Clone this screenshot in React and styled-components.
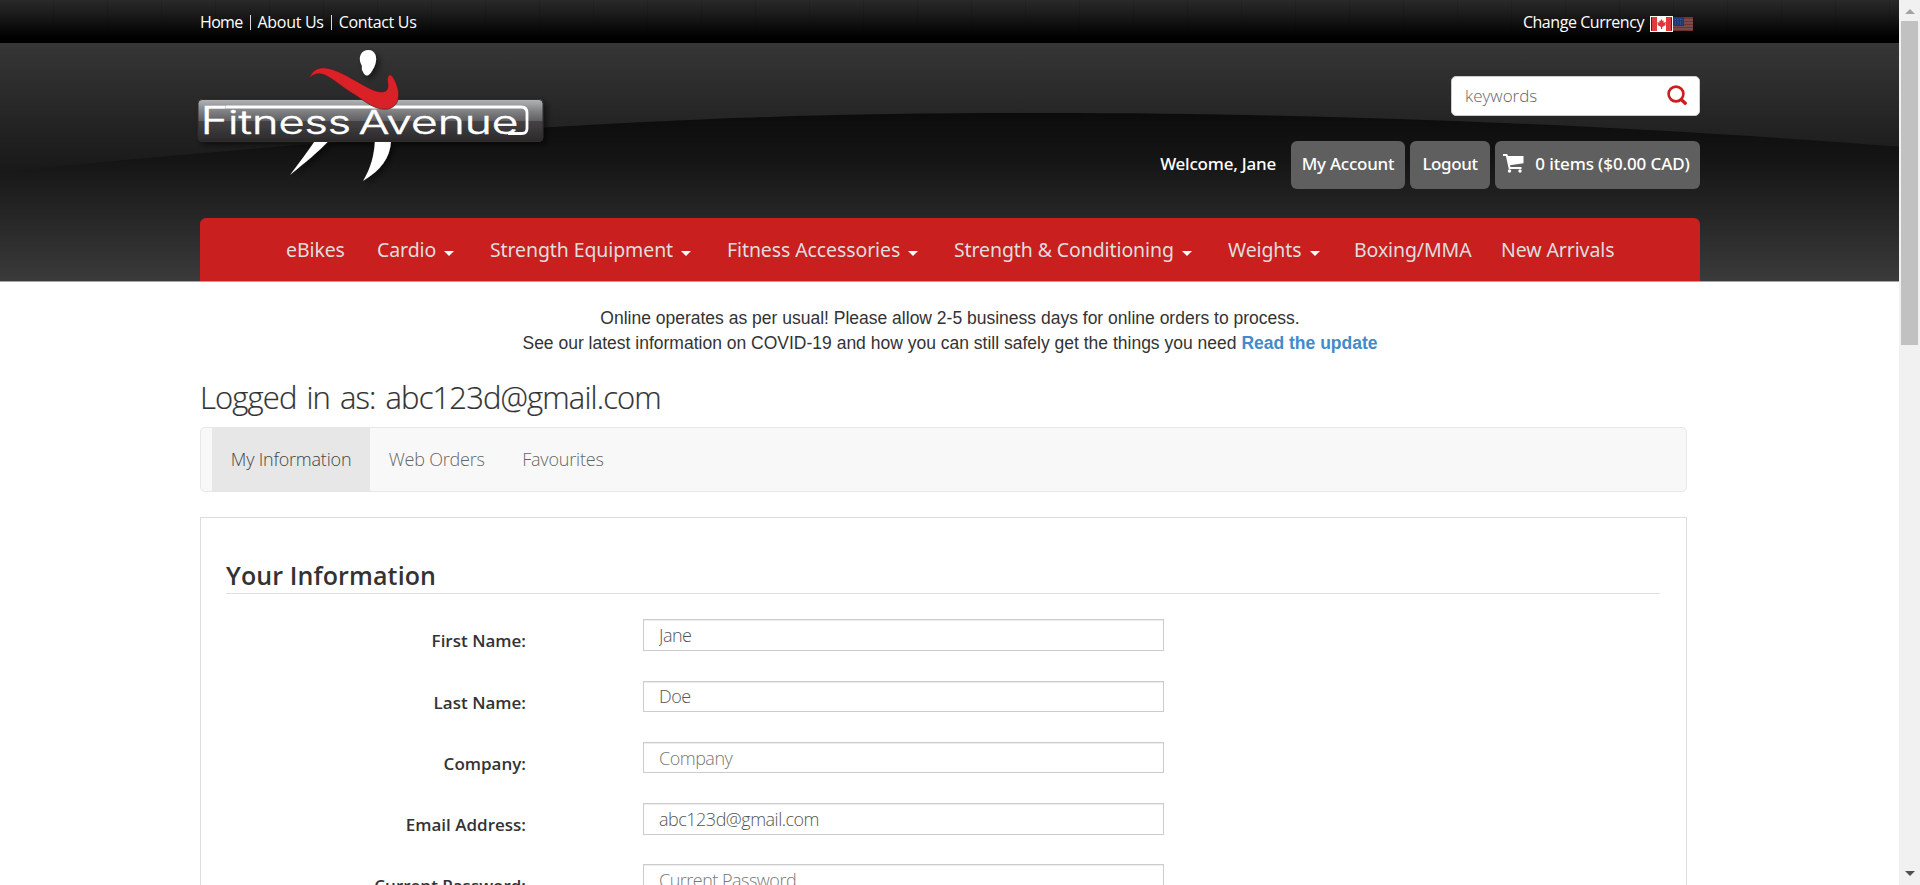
import React from "react";
import styled, { createGlobalStyle } from "styled-components";

const GlobalStyle = createGlobalStyle`
  * { box-sizing: border-box; }
  body { margin: 0; background: #fff; color: #333; overflow: hidden; font-family: "Open Sans", sans-serif; }
  a { text-decoration: none; color: inherit; }
`;

const Window = styled.div`
  display: flex;
  height: 885px;
  overflow: hidden;
`;

const Page = styled.div`
  flex: 1;
  min-width: 0;
  overflow: hidden;
`;

const Container = styled.div`
  width: 1500px;
  margin-left: 200px;
`;

const TopBar = styled.div`
  height: 43px;
  background:
    repeating-linear-gradient(90deg, transparent 0 53px, rgba(0, 0, 0, 0.1) 53px 54px),
    linear-gradient(#292929, #1b1b1b 14px, #000 37px);
  color: #fff;
  font-size: 16px;
  line-height: 45px;
`;

const TopRow = styled(Container)`
  display: flex;
  justify-content: space-between;
`;

const TopLinks = styled.nav`
  display: flex;
  gap: 7px;
`;

const TopText = styled.a`
  letter-spacing: ${(p) => p.$tracking}px;
  white-space: nowrap;
`;

const Divider = styled.span`
  width: 1px;
  height: 15px;
  margin-top: 15px;
  background: #d8d8d8;
`;

const Currency = styled.div`
  display: flex;
  align-items: flex-start;
  height: 43px;
  padding-right: 7px;
`;

const Flag = styled.svg`
  display: block;
  flex: none;
  margin-top: ${(p) => (p.$active ? 16 : 17)}px;
  margin-left: ${(p) => (p.$active ? 6 : 0)}px;
  opacity: ${(p) => (p.$active ? 1 : 0.6)};
`;

const Header = styled.header`
  position: relative;
  height: 239px;
  border-bottom: 1px solid #a5a3a3;
`;

const Backdrop = styled.svg`
  position: absolute;
  inset: 0;
  display: block;
`;

const HeaderBody = styled(Container)`
  position: relative;
`;

const HeaderTop = styled.div`
  display: flex;
  justify-content: space-between;
  height: 175px;
`;

const Logo = styled.svg`
  display: block;
  flex: none;
  margin-left: -10px;
`;

const Tools = styled.div`
  display: flex;
  flex-direction: column;
  align-items: flex-end;
  gap: 25px;
  padding-top: 33px;
`;

const SearchBox = styled.div`
  display: flex;
  align-items: center;
  justify-content: space-between;
  width: 249px;
  height: 40px;
  padding: 0 12px 2px 13px;
  border: 1px solid #ccc;
  border-radius: 5px;
  background: #fff;
  color: #666;
  font-size: 17px;
  font-weight: 300;
`;

const AccountRow = styled.div`
  display: flex;
  gap: 5px;
  height: 48px;
  color: #fff;
  font-family: "Noto Sans", sans-serif;
  font-size: 17px;
  font-weight: 500;
  line-height: 45px;
  white-space: nowrap;
`;

const Welcome = styled.span`
  margin-right: 10px;
  letter-spacing: -0.22px;
`;

const AccountButton = styled.a`
  display: flex;
  width: ${(p) => p.$width}px;
  justify-content: center;
  border-radius: 6px;
  background: #5f5f5f;
  letter-spacing: ${(p) => p.$tracking}px;
`;

const CartIcon = styled.svg`
  flex: none;
  margin: 13px 11px 0 -2px;
`;

const NavBar = styled.nav`
  display: flex;
  height: 63px;
  padding-left: 86px;
  border-radius: 6px 6px 0 0;
  background: #c91f1f;
  color: #dedede;
  font-family: "Noto Sans", sans-serif;
  font-size: 19.5px;
  line-height: 63px;
  letter-spacing: -0.1px;
`;

const NavItem = styled.a`
  display: flex;
  align-items: center;
  gap: 8px;
  flex: none;
  width: ${(p) => p.$width}px;
  white-space: nowrap;
`;

const Caret = styled.span`
  margin-top: 7px;
  border: 5px solid transparent;
  border-top-color: #fff;
  border-bottom: 0;
`;

const Notice = styled.p`
  margin: 24px 0 21px;
  font: 17.5px/25px "Liberation Sans", Arial, sans-serif;
  text-align: center;
`;

const NoticeLink = styled.a`
  color: #428bca;
  font-weight: 700;
`;

const Content = styled.main`
  width: 1487px;
`;

const LoginTitle = styled.h1`
  margin: 0 0 10px;
  font-size: 31px;
  font-weight: 300;
  line-height: 40px;
  letter-spacing: -0.88px;
  word-spacing: 2.8px;
  -webkit-text-stroke: 0.2px currentColor;
`;

const TabBar = styled.div`
  display: flex;
  height: 65px;
  padding-left: 11px;
  border: 1px solid #e7e7e7;
  border-radius: 5px;
  background: #f8f8f8;
`;

const Tab = styled.a`
  padding: 0 18.6px 0 18.8px;
  background: ${(p) => (p.$active ? "#e7e7e7" : "transparent")};
  color: ${(p) => (p.$active ? "#444" : "#666")};
  font-size: 18px;
  font-weight: 300;
  line-height: 63px;
  letter-spacing: -0.2px;
`;

const Panel = styled.section`
  height: 460px;
  margin-top: 25px;
  padding: 39px 26px 0 25px;
  border: 1px solid #ddd;
`;

const PanelTitle = styled.h2`
  margin: 0 0 25.4px;
  border-bottom: 1px solid #e0e0e0;
  font-size: 25px;
  font-weight: 600;
  line-height: 36px;
  letter-spacing: 0.12px;
`;

const FormRow = styled.div`
  display: grid;
  grid-template-columns: 300px 521px;
  column-gap: 117px;
  align-items: start;
  height: 61.25px;
`;

const Label = styled.label`
  font-size: 17px;
  font-weight: 600;
  line-height: 43px;
  text-align: right;
`;

const Field = styled.input`
  width: 100%;
  height: 31.5px;
  margin: 0;
  padding: 0 15px;
  border: 1px solid #ccc;
  border-radius: 0;
  outline: 0;
  background: #fff;
  box-shadow: inset 0 1px 1px rgba(0, 0, 0, 0.075);
  color: #555;
  font: 300 18px "Open Sans", sans-serif;
  letter-spacing: -0.5px;
  &::placeholder { color: #777; opacity: 1; }
`;

const ScrollTrack = styled.div`
  display: flex;
  flex-direction: column;
  align-items: center;
  width: 21px;
  padding: 9px 0;
  background: #f1f1f1;
`;

const ScrollArrow = styled.span`
  border: 5px solid transparent;
  ${(p) => (p.$up ? "border-top: 0; border-bottom-color: #a3a3a3;" : "border-bottom: 0; border-top-color: #505050; margin-top: auto;")}
`;

const ScrollThumb = styled.div`
  width: 17px;
  height: 324px;
  margin-top: 7px;
  background: #c1c1c1;
`;

const navItems = [
  { label: "eBikes", width: 91 },
  { label: "Cardio", width: 113, menu: true },
  { label: "Strength Equipment", width: 237, menu: true },
  { label: "Fitness Accessories", width: 227, menu: true },
  { label: "Strength & Conditioning", width: 274, menu: true },
  { label: "Weights", width: 126, menu: true },
  { label: "Boxing/MMA", width: 147 },
  { label: "New Arrivals", width: 112 },
];

const fields = [
  { label: "First Name", value: "Jane" },
  { label: "Last Name", value: "Doe" },
  { label: "Company" },
  { label: "Email Address", value: "abc123d@gmail.com" },
  { label: "Current Password" },
];

function HeaderBackdrop() {
  return (
    <Backdrop width="1899" height="238" viewBox="0 43 1899 238">
      <defs>
        <linearGradient id="upper" x1="0" y1="43" x2="0" y2="170" gradientUnits="userSpaceOnUse">
          <stop offset="0" stopColor="#363636" />
          <stop offset="1" stopColor="#191919" />
        </linearGradient>
        <linearGradient id="lower" x1="0" y1="114" x2="0" y2="281" gradientUnits="userSpaceOnUse">
          <stop offset="0" stopColor="#0c0c0c" />
          <stop offset="0.28" stopColor="#151515" />
          <stop offset="1" stopColor="#3a3a3a" />
        </linearGradient>
      </defs>
      <rect y="43" width="1899" height="238" fill="url(#upper)" />
      <path d="M0 172C180 154 370 138 545 127.500C760 115 880 113 1050 113C1190 113 1320 116 1440 120.500C1620 127 1770 137 1899 146.500V281H0Z" fill="url(#lower)" />
    </Backdrop>
  );
}

const LogoText = styled.text`
  fill: #fff;
  stroke: #fff;
  stroke-width: 0.5px;
  font-family: Inter, sans-serif;
  font-weight: 300;
  font-size: ${(p) => p.$size}px;
`;

function BrandLogo() {
  return (
    <Logo width="370" height="150" viewBox="190 43 370 150" role="img" aria-label="Fitness Avenue">
      <defs>
        <linearGradient id="plate" x1="0" y1="0" x2="0" y2="1">
          <stop offset="0" stopColor="#b4b5b7" />
          <stop offset="0.3" stopColor="#7c7d7f" />
          <stop offset="0.5" stopColor="#606163" />
          <stop offset="0.51" stopColor="#444345" />
          <stop offset="1" stopColor="#2b292a" />
        </linearGradient>
        <filter id="soft" x="-20%" y="-30%" width="140%" height="160%">
          <feDropShadow dx="3" dy="3" stdDeviation="3" floodColor="#000" floodOpacity="0.55" />
        </filter>
      </defs>
      <g filter="url(#soft)">
        <path d="M315 141L328.500 141C319 151 306 162 290 175C299 163 308 151 315 141Z" fill="#fff" />
        <path d="M375 141H391C390 158 381 170 363 181C371 168 374 155 375 141Z" fill="#fff" />
        <rect x="198" y="99.500" width="345" height="42" rx="4" fill="url(#plate)" stroke="#302d2e" strokeWidth="1" />
        <path d="M367 75.500C370 75 372.500 71 375 65C378 57 375 50 368.500 50C361 50 358 57 361 64C363 66.500 361 68.500 362.500 71C363.500 72.500 364 75 367 75.500Z" fill="#fff" />
      </g>
      <path d="M226 107H521Q527 107 527 113V128.500Q527 133.500 522 133.500H508" fill="none" stroke="#fff" strokeWidth="2.800" />
      <path d="M309 79C312 70 318 67 326 68C342 70 365 88 376 91C383 93 388 92 388 86C388 81 386 79 389 75C391 74 395 78 398 89C400 99 397 107 388 109C375 111 365 101 352 93C343 88 335 80 325 75C317 72 312 75 309 79Z" fill="#da2128" stroke="#4a1c20" strokeWidth="0.700" />
      <LogoText $size={38} x="200.500" y="134" textLength="28" lengthAdjust="spacingAndGlyphs">F</LogoText>
      <LogoText $size={32.5} x="228" y="134" textLength="123" lengthAdjust="spacingAndGlyphs">itness</LogoText>
      <LogoText $size={32.5} x="358.500" y="134" textLength="160" lengthAdjust="spacingAndGlyphs">Avenue</LogoText>
    </Logo>
  );
}

function CanadaFlag() {
  return (
    <Flag $active width="23" height="16" viewBox="0 0 23 16">
      <rect x="0.500" y="0.500" width="22" height="15" fill="#fff" stroke="#fff" />
      <path d="M1 1H7V15H1ZM16 1H22V15H16Z" fill="#e03a3e" />
      <path d="M1.500 1.500V14.500M21.500 1.500V14.500" stroke="#7c1010" />
      <path d="M11.500 3L12.600 5L13.700 4.500L13.500 6.700L16 6L15.300 8.300L15.800 9L12.200 11V13H11V11L7.400 9L7.900 8.300L7.200 6L9.500 6.700L9.300 4.500L10.400 5Z" fill="#e1343a" />
    </Flag>
  );
}

function UsaFlag() {
  return (
    <Flag width="20" height="14" viewBox="0 0 20 14">
      <rect width="20" height="14" fill="#b84a45" />
      <path d="M0 3H20M0 6H20M0 9H20M0 12H20" stroke="#b9aaaa" strokeWidth="1" />
      <rect width="11" height="9" fill="#2452b4" />
      <path d="M2 2.500H10M2 5H10M2 7H10" stroke="#90a9dc" strokeWidth="0.800" strokeDasharray="1 1.500" />
    </Flag>
  );
}

function SearchIcon() {
  return (
    <svg width="20" height="20" viewBox="0 0 20 20" fill="none" stroke="#c91f1f">
      <circle cx="9" cy="9" r="7.400" strokeWidth="2.600" />
      <path d="M14.200 14.600L18.200 18.200" strokeWidth="3.400" strokeLinecap="round" />
    </svg>
  );
}

function Cart() {
  return (
    <CartIcon width="21" height="19" viewBox="0 0 21 19" fill="#fff">
      <path d="M0 0H4.200L5 2H20.500V9.200L7 11.300L7.400 13H18.500V15H5.800L2.900 2H0Z" />
      <circle cx="6.500" cy="17" r="1.700" />
      <circle cx="17" cy="17" r="1.700" />
    </CartIcon>
  );
}

export default function App() {
  return (
    <>
      <GlobalStyle />
      <Window>
        <Page>
          <TopBar>
            <TopRow>
              <TopLinks>
                <TopText href="#" $tracking={-0.67}>Home</TopText>
                <Divider />
                <TopText href="#" $tracking={-0.3}>About Us</TopText>
                <Divider />
                <TopText href="#" $tracking={-0.3}>Contact Us</TopText>
              </TopLinks>
              <Currency>
                <TopText as="span" $tracking={-0.45}>Change Currency</TopText>
                <CanadaFlag />
                <UsaFlag />
              </Currency>
            </TopRow>
          </TopBar>
          <Header>
            <HeaderBackdrop />
            <HeaderBody>
              <HeaderTop>
                <BrandLogo />
                <Tools>
                  <SearchBox>
                    <span>keywords</span>
                    <SearchIcon />
                  </SearchBox>
                  <AccountRow>
                    <Welcome>Welcome, Jane</Welcome>
                    <AccountButton href="#" $width={114} $tracking={-0.25}>My Account</AccountButton>
                    <AccountButton href="#" $width={80} $tracking={-0.4}>Logout</AccountButton>
                    <AccountButton href="#" $width={205} $tracking={-0.12}>
                      <Cart />
                      0 items ($0.00 CAD)
                    </AccountButton>
                  </AccountRow>
                </Tools>
              </HeaderTop>
              <NavBar>
                {navItems.map((item) => (
                  <NavItem key={item.label} href="#" $width={item.width}>
                    {item.label}
                    {item.menu && <Caret />}
                  </NavItem>
                ))}
              </NavBar>
            </HeaderBody>
          </Header>
          <Container>
            <Notice>
              Online operates as per usual! Please allow 2-5 business days for online orders to process.
              <br />
              See our latest information on COVID-19 and how you can still safely get the things you need{" "}
              <NoticeLink href="#">Read the update</NoticeLink>
            </Notice>
            <Content>
              <LoginTitle>Logged in as: abc123d@gmail.com</LoginTitle>
              <TabBar>
                <Tab href="#" $active>My Information</Tab>
                <Tab href="#">Web Orders</Tab>
                <Tab href="#">Favourites</Tab>
              </TabBar>
              <Panel>
                <PanelTitle>Your Information</PanelTitle>
                {fields.map((field) => (
                  <FormRow key={field.label}>
                    <Label>{field.label}:</Label>
                    <Field defaultValue={field.value} placeholder={field.label} />
                  </FormRow>
                ))}
              </Panel>
            </Content>
          </Container>
        </Page>
        <ScrollTrack>
          <ScrollArrow $up />
          <ScrollThumb />
          <ScrollArrow />
        </ScrollTrack>
      </Window>
    </>
  );
}
